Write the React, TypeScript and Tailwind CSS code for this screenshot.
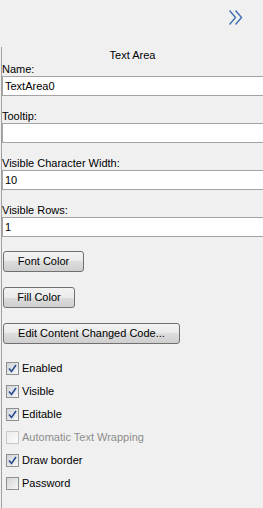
import React from "react";

const font = { fontFamily: '"Liberation Sans", Arial, sans-serif' };

function Field({ label, value, first }: { label: string; value: string; first?: boolean }) {
  return (
    <div className={first ? "flex flex-col" : "flex flex-col mt-[14px]"}>
      <div className="h-[13px] leading-[13px] pl-[0px] text-[11px] text-[#000]">{label}</div>
      <div className="ml-[0px] h-[20px] border border-r-0 border-[#a4a4a4] bg-white flex items-center pl-[2px] text-[11px] text-black">
        {value}
      </div>
    </div>
  );
}

function Btn({ label, w, first }: { label: string; w: string; first?: boolean }) {
  return (
    <div
      className={`${w} ${first ? "mt-[14px]" : "mt-[15px]"} ml-[1px] h-[21px] rounded-[3px] border border-[#707070] bg-[linear-gradient(to_bottom,#f2f2f2_0%,#ebebeb_50%,#dddddd_50%,#cfcfcf_100%)] flex items-center justify-center text-[11px] text-black`}
    >
      {label}
    </div>
  );
}

function Check({ label, state }: { label: string; state: "checked" | "unchecked" | "disabled" }) {
  return (
    <div className="h-[23px] flex items-center">
      <div
        className={
          state === "disabled"
            ? "ml-[4px] w-[13px] h-[13px] border border-[#c8c8c8] bg-[linear-gradient(135deg,#ececec,#fbfbfb)]"
            : state === "checked"
            ? "ml-[4px] w-[13px] h-[13px] border border-[#8e8f8f] bg-[linear-gradient(135deg,#cfd3d8,#f7f7f7)] flex items-center justify-center"
            : "ml-[4px] w-[13px] h-[13px] border border-[#8e8f8f] bg-[linear-gradient(135deg,#d5d5d5,#f5f5f5)]"
        }
      >
        {state === "checked" && (
          <svg width="9" height="9" viewBox="0 0 9 9">
            <path d="M1 4.5 L3.5 7.5 L8 1" fill="none" stroke="#2a4d8f" strokeWidth="1.6" />
          </svg>
        )}
      </div>
      <span className={`ml-[3px] text-[11px] ${state === "disabled" ? "text-[#8d8d8d]" : "text-black"}`}>{label}</span>
    </div>
  );
}

export default function App() {
  return (
    <div className="w-[263px] h-[508px] bg-[#f0f0f0] overflow-hidden flex flex-col" style={font}>
      <div className="h-[47px] shrink-0 flex justify-end items-start pr-[20px] pt-[10px]">
        <svg width="14" height="15" viewBox="0 0 14 15">
          <polyline points="0.5,0.5 6.5,7.5 0.5,14.5" fill="none" stroke="#3f6fb2" strokeWidth="1.4" />
          <polyline points="6.5,0.5 12.5,7.5 6.5,14.5" fill="none" stroke="#3f6fb2" strokeWidth="1.4" />
        </svg>
      </div>
      <div className="flex-1 ml-[1px] border-l border-[#a0a0a0] flex flex-col pl-[0px]">
        <div className="h-[16px] leading-[16px] text-center text-[11px] text-black">Text Area</div>
        <div className="flex flex-col">
          <Field label="Name:" value="TextArea0" first />
          <Field label="Tooltip:" value="" />
          <Field label="Visible Character Width:" value="10" />
          <Field label="Visible Rows:" value="1" />
        </div>
        <Btn label="Font Color" w="w-[81px]" first />
        <Btn label="Fill Color" w="w-[72px]" />
        <Btn label="Edit Content Changed Code..." w="w-[177px]" />
        <div className="mt-[13px] flex flex-col">
          <Check label="Enabled" state="checked" />
          <Check label="Visible" state="checked" />
          <Check label="Editable" state="checked" />
          <Check label="Automatic Text Wrapping" state="disabled" />
          <Check label="Draw border" state="checked" />
          <Check label="Password" state="unchecked" />
        </div>
      </div>
    </div>
  );
}
